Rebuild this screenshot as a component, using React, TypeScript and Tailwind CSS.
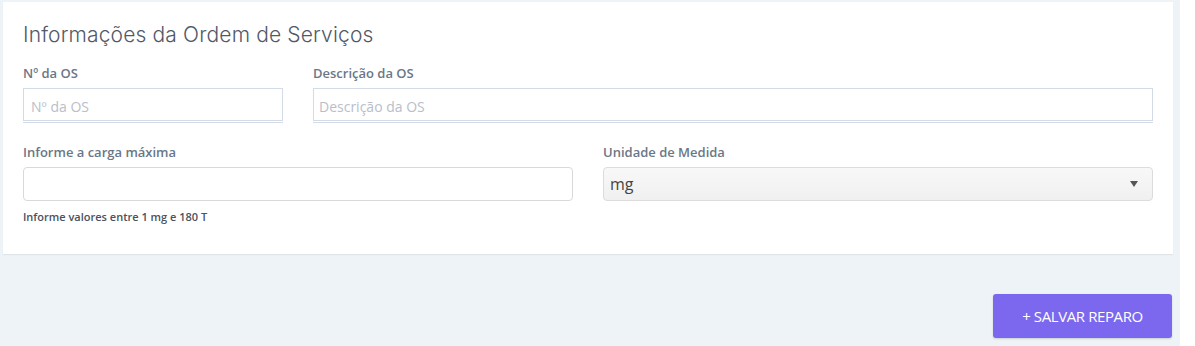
import React from "react";

const labelCls =
  "block text-[13px] leading-[18px] font-semibold text-[#6b7787] font-['Open_Sans',sans-serif]";

export default function App() {
  return (
    <div className="flex w-[1195px] h-[346px] bg-white font-['Open_Sans',sans-serif]">
      <div className="w-[1180px] h-[346px] bg-[#edf3f7] pt-[2px] pl-[3px]">
        <div className="w-[1170px] h-[252px] bg-white shadow-[0_1px_1px_rgba(0,0,0,0.06)] px-5 pt-[19px]">
          <h1 className="text-[21px] leading-[28px] font-light text-[#525868] font-['Inter',sans-serif] tracking-[0.15px]">
            Informações da Ordem de Serviços
          </h1>
          <div className="flex gap-[30px] mt-[15px]">
            <div className="w-[260px]">
              <label className={labelCls}>Nº da OS</label>
              <div className="mt-[6px] h-[33px] border border-[#d3dbe7] shadow-[0_1px_0_#fff,0_2px_0_#d3dbe7] flex items-center pt-[3px] px-[7px] text-[14px] text-[#b9bec8]">
                Nº da OS
              </div>
            </div>
            <div className="flex-1">
              <label className={labelCls}>Descrição da OS</label>
              <div className="mt-[6px] h-[33px] border border-[#d3dbe7] shadow-[0_1px_0_#fff,0_2px_0_#d3dbe7] flex items-center pt-[3px] px-[5px] text-[14px] text-[#b9bec8]">
                Descrição da OS
              </div>
            </div>
          </div>
          <div className="flex gap-[30px] mt-[22px]">
            <div className="w-[550px]">
              <label className={labelCls}>Informe a carga máxima</label>
              <div className="mt-[6px] h-[34px] border border-[#d9d9d9] rounded-[4px] bg-white" />
              <p className="mt-[9px] text-[11px] leading-[14px] font-semibold text-[#4a5160] tracking-[0px]">
                Informe valores entre 1 mg e 180 T
              </p>
            </div>
            <div className="w-[550px]">
              <label className={labelCls}>Unidade de Medida</label>
              <div className="mt-[6px] h-[34px] border border-[#dcdcdc] rounded-[4px] bg-gradient-to-b from-[#f8f8f8] to-[#f0f0f0] flex items-center justify-between pl-[6px] pr-[14px]">
                <span className="text-[16px] text-[#444]">mg</span>
                <svg width="8" height="6" viewBox="0 0 8 6">
                  <path d="M0 0 L8 0 L4 6 Z" fill="#555" />
                </svg>
              </div>
            </div>
          </div>
        </div>
        <div className="flex justify-end pr-[8px] mt-[40px]">
          <button className="w-[179px] h-[44px] rounded-[3px] bg-[#7b68ee] shadow-[0_1px_2px_rgba(0,0,0,0.15)] text-white text-[15px] tracking-[-0.4px]">
            + SALVAR REPARO
          </button>
        </div>
      </div>
    </div>
  );
}
